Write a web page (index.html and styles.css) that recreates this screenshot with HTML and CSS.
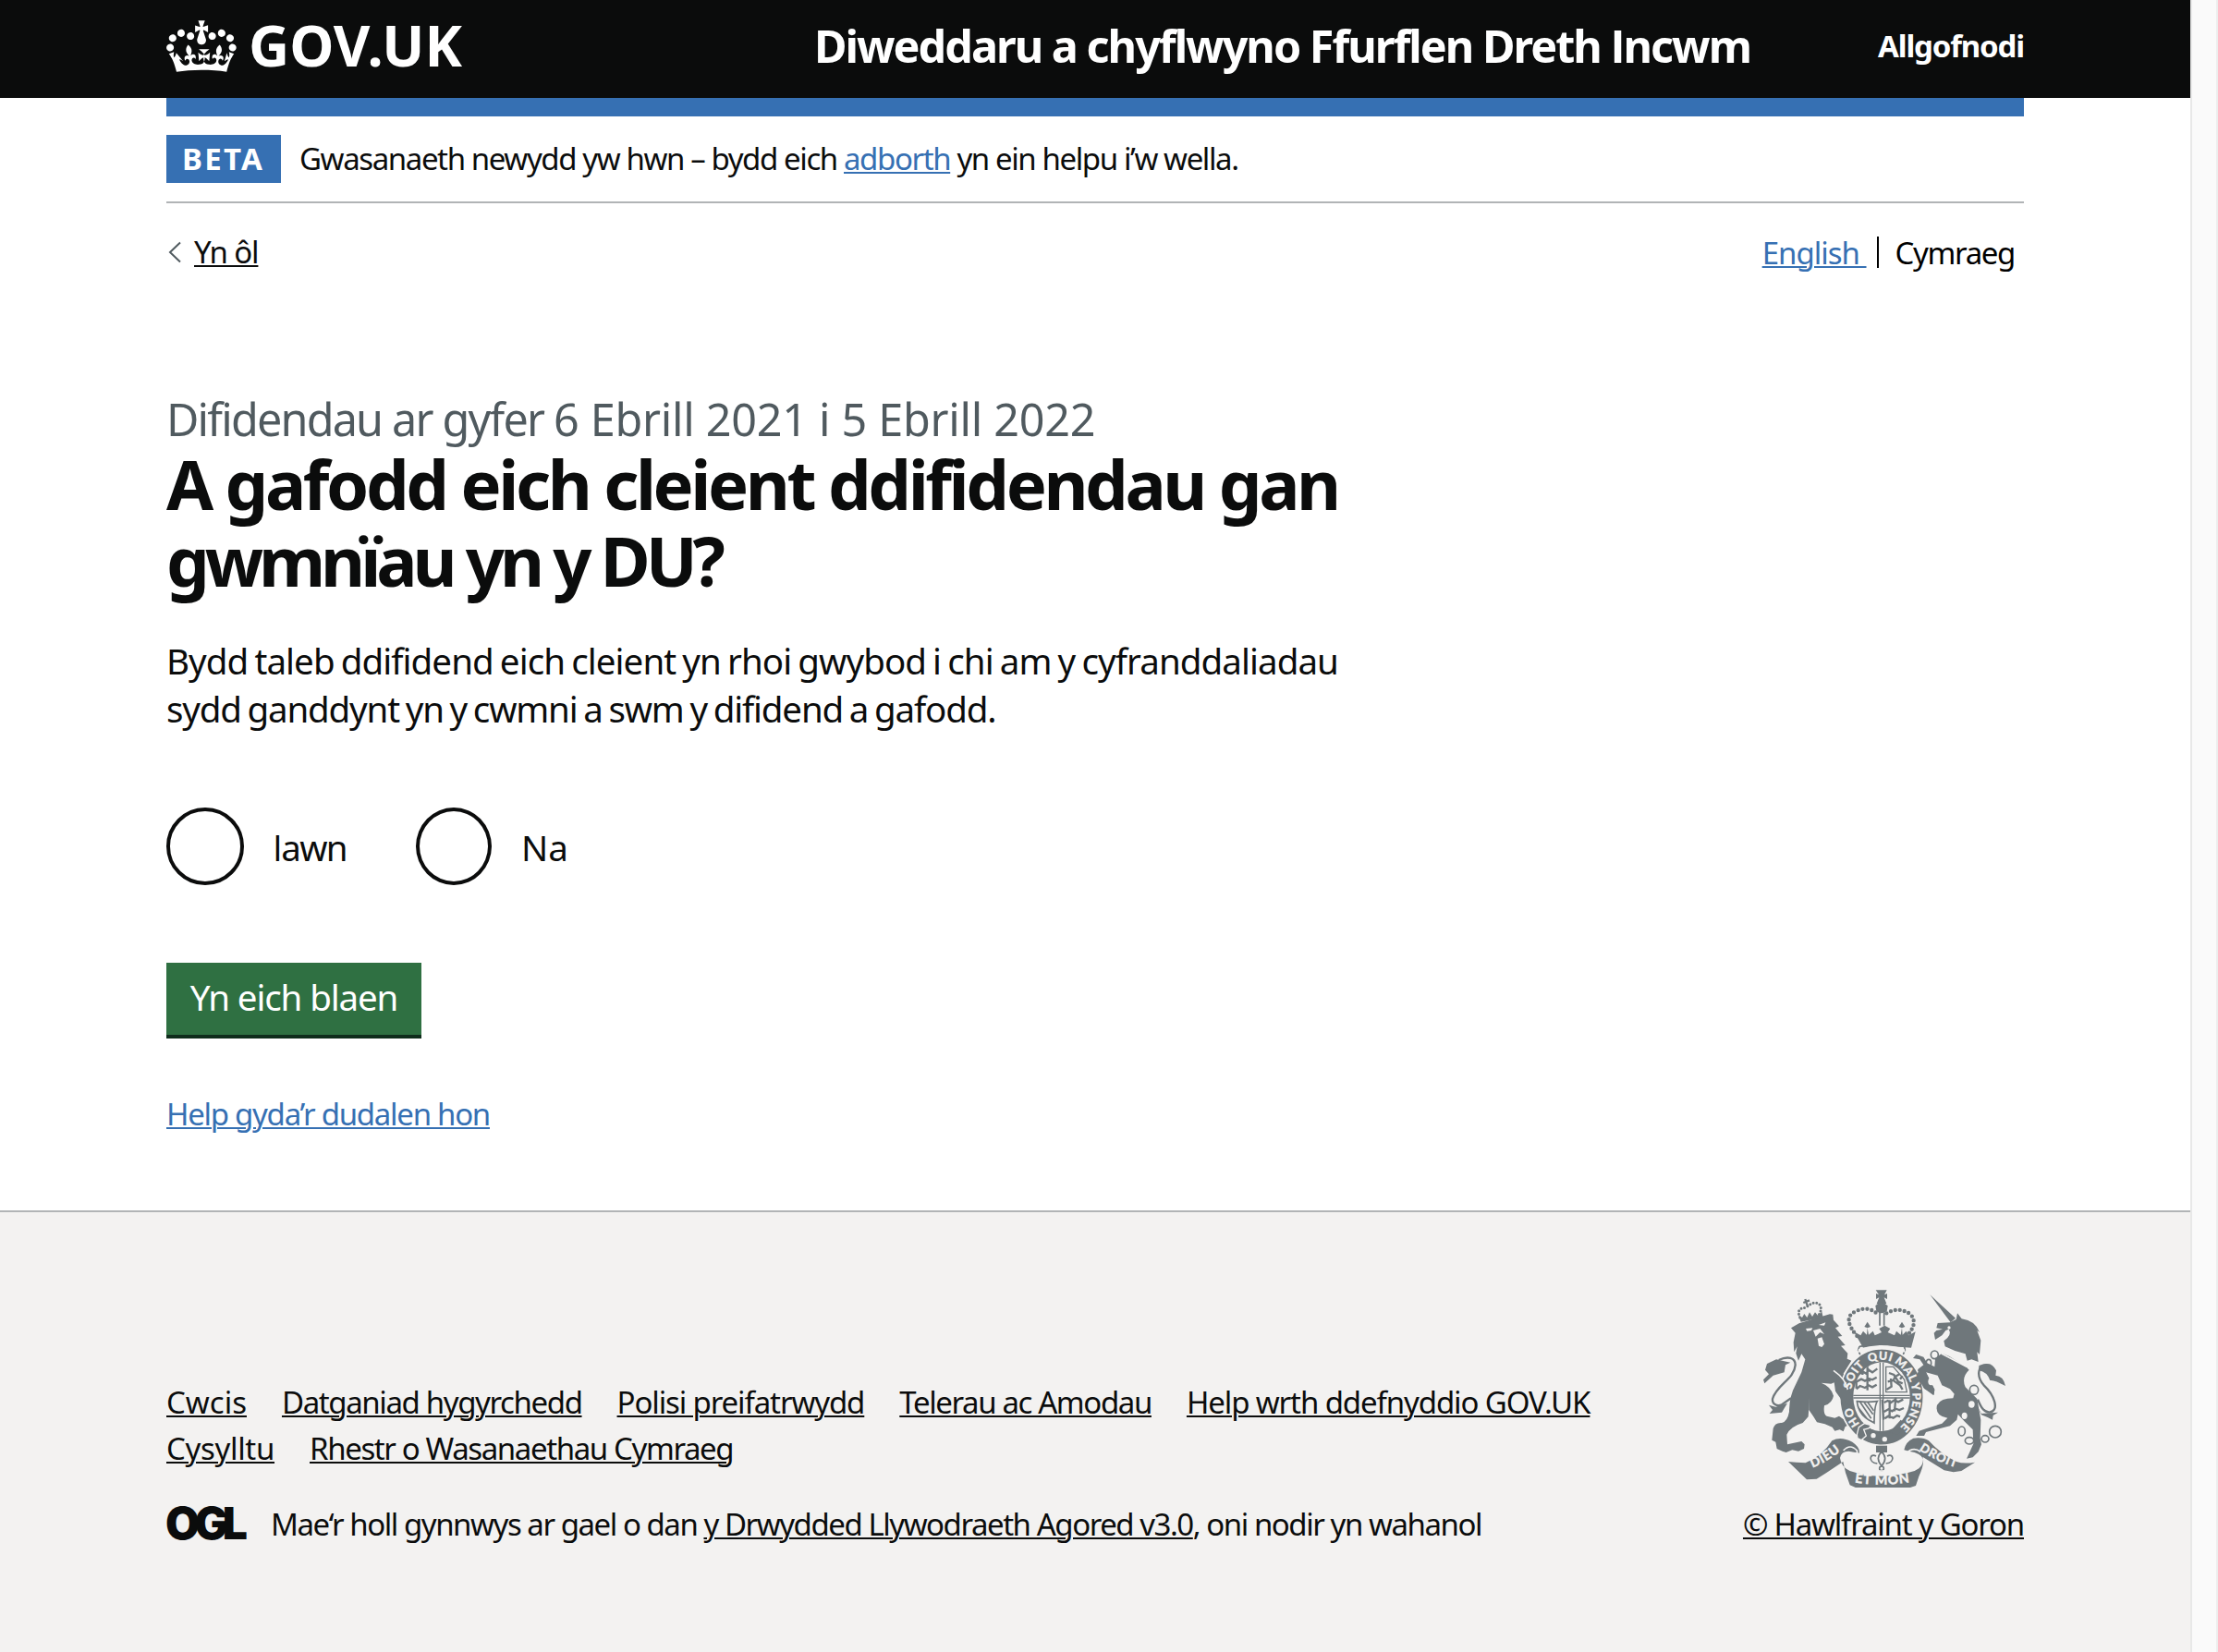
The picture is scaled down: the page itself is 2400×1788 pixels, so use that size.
FILE: index.html
```html
<!DOCTYPE html>
<html lang="cy">
<head>
<meta charset="utf-8">
<title>Difidendau - GOV.UK</title>
<link rel="stylesheet" href="styles.css">
</head>
<body>
<div class="page">
  <header class="header">
    <div class="container header-row">
      <a class="logo" href="#">
        <svg class="crown" viewBox="-0.1 4 35.9 26.1" preserveAspectRatio="none" aria-hidden="true"><path fill="#fff" d="M6.7 12.2c1 .4 2.1-.1 2.5-1s-.1-2.1-1-2.5c-1-.4-2.1.1-2.5 1-.4 1 0 2.1 1 2.5m-4.3 2.5c1 .4 2.1-.1 2.5-1s-.1-2.1-1-2.5c-1-.4-2.1.1-2.5 1-.5 1 0 2.1 1 2.5m-1.3 4.8c1 .4 2.1-.1 2.5-1 .4-1-.1-2.1-1-2.5-1-.4-2.1.1-2.5 1-.4 1 0 2.1 1 2.5m10.4-5.8c1 .4 2.1-.1 2.5-1s-.1-2.1-1-2.5c-1-.4-2.1.1-2.5 1s0 2.1 1 2.5m17.4-1.5c-1 .4-2.1-.1-2.5-1s.1-2.1 1-2.5c1-.4 2.1.1 2.5 1 .5 1 0 2.1-1 2.5m4.3 2.5c-1 .4-2.1-.1-2.5-1s.1-2.1 1-2.5c1-.4 2.1.1 2.5 1 .5 1 0 2.1-1 2.5m1.3 4.8c-1 .4-2.1-.1-2.5-1-.4-1 .1-2.1 1-2.5 1-.4 2.1.1 2.5 1 .4 1 0 2.1-1 2.5m-10.4-5.8c-1 .4-2.1-.1-2.5-1s.1-2.1 1-2.5c1-.4 2.1.1 2.5 1s0 2.1-1 2.5m-5.3-4.9 2.4 1.3V6.5l-2.4.8c-.1-.1-.1-.2-.2-.2s1-3 1-3h-3.4l1 3c-.1.1-.2.1-.2.2-.1.1-2.4-.7-2.4-.7v3.5L17 8.8c-.1.1 0 .2.1.3l-1.4 4.2c-.1.2-.1.4-.1.7 0 1.1.8 2.1 1.9 2.2h.8c1.1-.2 1.9-1.1 1.9-2.1 0-.2 0-.4-.1-.7l-1.4-4.2c.2-.2.3-.3.2-.4m-1 20.3c4.6 0 8.9.3 12.8.9 1.1-4.6 2.4-7.2 3.8-9.1l-2.6-.9c.3 1.3.3 1.9 0 2.8-.4-.4-.8-1.2-1.1-2.4l-1.2 4.2c.8-.5 1.4-.9 2-.9-1.2 2.6-2.7 3.2-3.6 3-1.2-.2-1.7-1.3-1.5-2.2.3-1.3 1.6-1.6 2.2-.1 1.2-2.4-.8-3.1-2.1-2.4 1.9-1.9 2.2-3.6.6-5.7-2.2 1.7-2.2 3.3-1.2 5.6-1.3-1.5-3.3-.7-2.5 1.7.9-1.4 2.1-.5 2 .8-.2 1.2-1.7 2.1-3.7 1.9-2.8-.2-2.9-2.2-3-3.7.7-.1 1.9.5 3 2l.4-4.4c-1.1 1.2-2.2 1.4-3.3 1.5.4-1.2 3-3.1 3-3.1h-5.4s2.6 1.9 3 3.1c-1.1 0-2.2-.3-3.3-1.5l.4 4.4c1.1-1.5 2.3-2.1 3-2-.1 1.6-.2 3.5-3 3.7-1.9.2-3.5-.7-3.7-1.9-.2-1.3 1.1-2.2 1.9-.8.7-2.4-1.3-3.1-2.6-1.7 1-2.3 1-4-1.2-5.6-1.6 2.1-1.3 3.8.6 5.7-1.3-.7-3.2 0-2.1 2.4.6-1.5 1.9-1.1 2.2.1.2.9-.4 1.9-1.5 2.2-1 .2-2.5-.5-3.7-3 .7 0 1.3.4 2 .9L5 20.4c-.3 1.2-.7 1.9-1.2 2.4-.3-.8-.2-1.5 0-2.8l-2.6.9C2.7 22.8 4 25.4 5.1 30c3.8-.5 8.2-.9 12.7-.9"/></svg>
        <span class="logo-text">GOV.UK</span>
      </a>
      <a class="service" href="#">Diweddaru a chyflwyno Ffurflen Dreth <span class="cap-i">I</span>ncwm</a>
      <a class="signout" href="#">Allgofnodi</a>
    </div>
  </header>
  <div class="container">
    <div class="blue-bar"></div>
    <div class="phase">
      <strong class="tag">BETA</strong>
      <span class="phase-text">Gwasanaeth newydd yw hwn – bydd eich <a class="link" href="#">adborth</a> yn ein helpu i’w wella.</span>
    </div>
    <div class="nav-row">
      <a class="back" href="#"><svg class="chevron" viewBox="0 0 14 24" aria-hidden="true"><path d="M13 1.500 2 12l11 10.500" fill="none" stroke="#505a5f" stroke-width="2"/></svg><span class="back-text">Yn ôl</span></a>
      <div class="langs"><a class="link english" href="#">English&nbsp;</a><span class="cymraeg">Cymraeg</span></div>
    </div>
    <main class="main">
      <p class="caption"><span class="caption-topic">Difidendau ar gyfer </span><span class="caption-dates">6 Ebrill 2021 i 5 Ebrill 2022</span></p>
      <h1 class="title"><span class="title-first">A gafodd eich cleient ddifidendau gan</span><br><span class="title-second">gwmnïau yn y DU?</span></h1>
      <p class="body"><span class="body-first">Bydd taleb ddifidend eich cleient yn rhoi gwybod i chi am y cyfranddaliadau</span><br><span class="body-second">sydd ganddynt yn y cwmni a swm y difidend a gafodd.</span></p>
      <div class="radios">
        <label class="radio"><span class="dot"></span><span class="radio-text"><span class="cap-i">I</span>awn</span></label>
        <label class="radio"><span class="dot dot-narrow"></span><span class="radio-text radio-text-short">Na</span></label>
      </div>
      <button class="button" type="button">Yn eich blaen</button>
      <p class="help"><a class="link" href="#">Help gyda’r dudalen hon</a></p>
    </main>
  </div>
  <footer class="footer">
    <div class="container footer-row">
      <div class="footer-main">
        <ul class="footer-links">
          <li class="short"><a href="#">Cwcis</a></li>
          <li class="tight"><a href="#">Datganiad hygyrchedd</a></li>
          <li><a href="#">Polisi preifatrwydd</a></li>
          <li class="tight"><a href="#">Telerau ac Amodau</a></li>
          <li><a href="#">Help wrth ddefnyddio GOV.UK</a></li>
          <li class="short loose"><a href="#">Cysylltu</a></li>
          <li class="tight"><a href="#">Rhestr o Wasanaethau Cymraeg</a></li>
        </ul>
        <div class="licence">
          <span class="ogl">OGL</span>
          <span class="licence-text">Mae‘r holl gynnwys ar gael o dan <a href="#">y Drwydded Llywodraeth Agored v3.0</a>, oni nodir yn wahanol</span>
        </div>
      </div>
      <div class="copyright">
        <svg class="arms" viewBox="84 78 786 642" aria-hidden="true">
          <defs>
            <path id="motto" d="M468 547A101 121 0 0 1 468 305A101 121 0 0 1 468 547"/>
            <path id="dieu" d="M238 658Q292 638 344 594"/>
            <path id="mon" d="M378 703Q468 717 560 703"/>
            <path id="droit" d="M584 594Q636 632 716 658"/>
          </defs>
          <g class="ink">
            <!-- lion -->
            <path d="M200 187 300 157l10 1 2 18 18 20-12 6 22 26-14 2 24 28-14 2 22 24-2 18 14 6-26 42 18 30 4 18 6 22-4 20-18-1-14 2-4-22-14-12-4-28-10 4-32-3q32 12 40 42-4 24-30 32-4 30 8 34l26 6 14-6 22 16 8 14-10 4-6 16-12-6-16 4-8-12-24-10-26-6-12-20-14-20 2-40-4 62-18 20q-40 12-52 38l2 32 46-10 10 10-2 14-18 8-20-4-20 8-12-4-18-8-4-22-12-6 4-38q6-20 28-18 18-4 24-36 0-50 20-86l20-42 12-42-12-18-10 22-8-24 4-22-10 18-2-32 6-30-14-16z"/>
            <path d="M126 304 96 318l-6 20 12 14-18 18 4 12 28-26 36-10 4-24 16-8z"/>
            <path class="line w7" d="M134 306c30-14 54-8 54 16-4 48-60 62-74 110-2 18 14 24 28 20l32-22"/>
            <path d="M102 452 124 458l38-12-18 30-40 4 10-12z"/>
            <path d="m206 182-8-22 12 8 7-12 9 12 8-17 9 14 9-14 9 10 13-12 4 19z"/>
            <path class="line dots" d="M203 168q-14-32 20-32 24-24 42-12 12 14 0 34"/>
            <path class="line w7" d="m214 120 20-8m-14-4 8 24"/>
            <!-- unicorn -->
            <path d="M625 94 708 170l-16 14z"/>
            <path d="m690 184 20-10 4-20 14 18q44 6 58 44l-8-6 12 32-4 46-8-8 4 32-22-8-14 4-6-22-34-10-32-14-4-18q28-20 16-38l-10 4-12 16-22 14-4-22 8-8 20-4-20-4 4-16z"/>
            <path d="M664 284 688 294 744 330 752 338Q726 362 740 394L778 432 784 466 790 500 788 560 792 580 782 604 764 622 744 626 766 578 764 532 738 506 716 482 712 500 690 520 612 540 606 552 580 552 590 536 614 528 664 512 682 494Q640 488 648 452 660 430 700 430L704 416 690 400 664 388 650 356 612 346 640 402 638 420 622 408 606 398 582 362 586 336 604 322 592 304 570 300 580 288 604 296 616 316 640 328 642 300z"/>
            <path d="M784 324q40-18 56 16l-2 16q26 2 32 34-36-20-50-18-10-28-36-32z"/>
            <path class="line w7" d="M822 324c-44-12-48 34-22 64 32 30 54 82 18 88-22-2-30-24-38-42"/>
            <path d="m776 452 16 28 54-4-16 10-2 14-16-8-20-8z"/>
            <circle class="line w5" cx="837" cy="539" r="19"/><ellipse class="line w5" cx="804" cy="562" rx="12" ry="11"/><ellipse class="line w5" cx="753" cy="568" rx="14" ry="11"/><ellipse class="line w5" cx="728" cy="537" rx="11" ry="15"/><ellipse class="line w5" cx="768" cy="403" rx="14" ry="15"/><ellipse class="line w5" cx="640" cy="289" rx="12" ry="13"/><ellipse class="line w5" cx="621" cy="316" rx="8" ry="12"/>
            <!-- royal crown -->
            <path d="M449 79h36l-8 15 9-4v18l-10-5 8 20h-32l8-20-10 5V90l9 4z"/>
            <path d="M448 130q20-22 40 0l-3 18q-18 12-34 0z"/>
            <path class="line dots-lg" d="M388 228Q340 170 380 150q40-22 72 4m32 0q40-22 76 2 30 30-12 74"/>
            <path d="m378 214 22 12 8-14 12 12 2-22-10-4 10-16 10 16-10 4 4 22 14-12 6 14 22-10-8-12 18-10 18 10-8 12 22 10 6-14 14 12 4-22-10-4 10-16 10 16-10 4 2 22 12-12 8 14 22-12-14 52-78-6-78 6z"/>
            <path class="line w5" d="M462 152v42m14-42v42"/>
            <path class="line w5" d="M396 262q72-14 146 0l2 12-8 18M396 262l-4 12 8 18"/>
            <!-- garter -->
            <ellipse class="garter" cx="468" cy="426" rx="136" ry="157"/>
            <path d="M322 350 346 372 362 400 372 430 364 454 350 440 344 456 334 430 320 410z"/>
            <path d="M584 346 612 346 640 402 636 420 606 398 586 366z"/>
            <!-- scrolls -->
            <path d="M165 636q24 2 56 4 54-22 86-72 28-16 66 4 26 18 22 36l-34-6q-24 0-28 22 4 22 18 34l14 8q100 34 210 0l14-8q14-12 14-30-6-20-46-26l-16-4q4-26 30-38 32-4 50 8 40 44 90 68 24 8 60 2l-44 28-26 4-30-6-70-44q8 20-12 64l-10 30-42 14-70 6-70-8-32-14-14-40-8-36-54 36-32 20-32 2z"/>
            <path d="M450 584h36v22h-36z"/>
            <circle class="line w5" cx="468" cy="658" r="7"/>
          </g>
          <g class="paper">
            <ellipse cx="468" cy="425" rx="92" ry="112"/>
            <path d="m264 192 22-8-4 10zm-42 12 22-2-4 8-14 2zm38 32 14-4 8 22-8 10-10-4z"/>
            <path d="m246 210 8 20 14-14 14 6-14-18z"/>
            <path d="M393 270q75-24 149 0l4 12q-76-22-156 0z"/>
            <ellipse cx="760" cy="450" rx="10" ry="11"/><ellipse cx="737" cy="487" rx="9" ry="11"/><ellipse cx="629" cy="376" rx="10" ry="12"/>
            <path class="cut w5" d="m668 264 84 64 12-14m-96-50-4 22 80 42"/>
            <path class="cut w5" d="M672 268q36 34 86 52M344 600q22-24 44 0 4 20-26 28M594 604q-22-18-46 4 0 14 20 20M312 340q40 28 46 62"/>
            <circle cx="441" cy="551" r="8"/><circle cx="478" cy="563" r="8"/>
            <circle cx="687" cy="201" r="5"/>
            <path d="M350 622q-4-14 18-8 20 4 24-8 8 16-6 26l-8 14q42 18 90 18t98-20l-14-14q-16-20 8-26 4 18 24 14 12 2 8 14l-14 16q-108 40-212 2-16-8-16-28z"/>
          </g>
          <g class="ink">
            <path class="line w5" d="M468 604q-22 20 0 46 22-26 0-46m-14 38c-32-4-24-36-4-24m32 24c32-4 24-36 4-24"/>
            <path class="line w4" d="M463 314v222m10-222v222M376 421h184m-184 8h184"/>
            <path class="line w7" d="m396 350 12-6 10 6 8-12 12 8 16-12m-66 42 14-8 12 6 12-8 12 4 14-8m-66 38 12-10 16 6 12-8 12 6 14-8m-46-52v20m16-26v76m-36-30v24m38-64 4 10m-6 24 10 6"/>
            <path class="line w7" d="m476 444 12-6 10 6 12-8 12 6 16-8m-62 40 14-8 12 6 12-8 12 4 14-6m-62 34 12-8 16 6 12-8 10 4m-58-56 4 66m20-64v60m20-68-4 44"/>
            <path class="line w4" d="M482 328h24l36 42 8 40h-68z"/>
            <path class="line w7" d="m492 348 16 6 14 22 14 6m-48-6 18-4 6-12 14-8m-28 14 2 26-16 10m24-28 20 14 8 14m-8-34 8-10"/>
            <path class="line w5" d="M388 440q34 4 66 0-10 16-10 70l-18-10q-34-20-38-60zm10 2 36 54m-24-54 30 40m-18-40 20 28m-50-10 30 38"/>
            <path d="M494 540 530 500 552 516 520 548z"/>
            <path class="buckle" d="m388 548 6-24 18-12 22 6-8 10-16 4 8 20-16 14-12-6z"/>
          </g>
          <g class="motto-text">
            <text font-size="37"><textPath href="#motto" startOffset="112">HO</textPath></text>
            <text font-size="37"><textPath href="#motto" startOffset="245">SOIT</textPath></text>
            <text font-size="37"><textPath href="#motto" startOffset="345">QUI</textPath></text>
            <text font-size="37"><textPath href="#motto" startOffset="434">MAL</textPath></text>
            <text font-size="37"><textPath href="#motto" startOffset="493">Y</textPath></text>
            <text font-size="37"><textPath href="#motto" startOffset="572">PENSE</textPath></text>
            <text font-size="42"><textPath href="#dieu" startOffset="60">DIEU</textPath></text>
            <text font-size="43"><textPath href="#mon" startOffset="93">ET MON</textPath></text>
            <text font-size="40"><textPath href="#droit" startOffset="74">DROIT</textPath></text>
          </g>
        </svg>
        <a class="copyright-link" href="#">© Hawlfraint y Goron</a>
      </div>
    </div>
  </footer>
</div>
<div class="scroll-gutter"></div>
</body>
</html>
```
FILE: styles.css
```css
* { box-sizing: border-box; }
body {
  margin: 0;
  display: flex;
  height: 1788px;
  overflow: hidden;
  background: #fff;
  color: #0b0c0c;
  font-family: "Noto Sans", "Liberation Sans", sans-serif;
  font-size: 33px;
}
p, h1, ul { margin: 0; padding: 0; }
a { color: inherit; text-decoration-thickness: 2px; text-underline-offset: 2px; }
.page { width: 2370px; display: flex; flex-direction: column; }
.scroll-gutter { width: 30px; background: #fafafa; border-left: 2px solid #e8e8e8; border-right: 2px solid #ededed; }
.container { width: 2010px; margin: 0 auto; white-space: nowrap; }
.cap-i { font-family: "Open Sans", sans-serif; }

.header { height: 106px; background: #0b0c0c; color: #fff; font-weight: 700; }
.header a { text-decoration: none; }
.header-row { display: grid; grid-template-columns: 701px 1fr auto; align-items: center; height: 98px; }
.logo { display: flex; align-items: center; }
.crown { width: 76px; height: 56px; margin: 2px 13px 0 0; }
.logo-text { font-size: 61px; line-height: 60px; letter-spacing: 0; }
.service { font-size: 48.500px; line-height: 60px; letter-spacing: -1.980px; }
.signout { font-size: 33px; letter-spacing: -1.160px; }

.blue-bar { height: 20px; background: #3670b3; }
.phase { display: flex; align-items: center; padding: 20px 0; border-bottom: 2px solid #b1b4b6; }
.tag { width: 124px; height: 52px; padding-left: 17px; line-height: 52px; letter-spacing: 2.300px; color: #fff; background: #3670b3; }
.phase-text { margin-left: 20px; line-height: 50px; letter-spacing: -1.400px; }
.link { color: #3670b3; }
.nav-row { display: flex; justify-content: space-between; align-items: center; height: 52px; margin-top: 26px; }
.back { display: flex; align-items: center; text-decoration: none; }
.back-text { text-decoration: underline; text-decoration-thickness: 2px; text-underline-offset: 2px; letter-spacing: -1.150px; }
.chevron { width: 14px; height: 24px; margin: 2px 14px 0 2px; }
.langs { display: flex; align-items: center; color: #000; padding: 3px 10px 0 0; letter-spacing: -1px; }
.cymraeg { position: relative; padding-left: 31px; letter-spacing: -1.350px; }
.cymraeg::before { content: ""; position: absolute; left: 11px; top: 5px; width: 2px; height: 34px; background: #000; }

.main { padding-top: 127px; height: 1012px; }
.caption { font-size: 48.500px; line-height: 56px; color: #505a5f; }
.caption-topic { letter-spacing: -1.800px; }
.caption-dates { letter-spacing: -0.280px; }
.title { margin-top: 2px; font-size: 74px; line-height: 82.500px; }
.title-first { letter-spacing: -3.420px; }
.title-second { letter-spacing: -5.050px; }
.body { margin-top: 41px; font-size: 38.500px; line-height: 52px; }
.body-first { letter-spacing: -0.920px; word-spacing: -2px; }
.body-second { letter-spacing: -1.180px; word-spacing: -2px; }
.radios { display: flex; margin-top: 81px; font-size: 38.500px; }
.radio { display: flex; align-items: center; height: 84px; width: 270px; gap: 31px; }
.radio-text { padding-top: 2px; letter-spacing: -1.600px; }
.radio-text-short { margin-left: 1px; letter-spacing: 0; }
.dot { width: 84px; height: 84px; border: 4px solid #0b0c0c; border-radius: 50%; }
.dot-narrow { width: 82px; }
.button { display: block; width: 276px; height: 78px; margin-top: 84px; padding: 0 0 4px; border: 0; background: #2f7042; box-shadow: 0 4px 0 #0f2d1c; color: #fff; font: 38.500px/52px "Noto Sans", sans-serif; letter-spacing: -1.120px; }
.help { margin-top: 66px; line-height: 40px; letter-spacing: -1.280px; }

.footer { flex: 1; padding-top: 84px; border-top: 2px solid #b1b4b6; background: #f3f2f1; }
.footer-row { display: flex; align-items: flex-end; justify-content: space-between; }
.footer-links { display: flex; flex-wrap: wrap; gap: 0 38px; width: 1600px; list-style: none; line-height: 50px; letter-spacing: -1.120px; }
.tight { letter-spacing: -1.390px; }
.short { letter-spacing: 0; }
.loose { letter-spacing: -0.330px; }
.licence { display: flex; align-items: center; height: 50px; margin-top: 31px; padding-top: 1px; }
.licence-text { letter-spacing: -1.460px; }
.ogl { width: 113px; font: 900 48px/48px Inter, sans-serif; letter-spacing: -5.800px; margin-top: -2px; text-indent: -1px; }
.copyright { display: flex; flex-direction: column; align-items: flex-end; line-height: 50px; }
.copyright-link { height: 49px; letter-spacing: -1.220px; }
.arms { width: 262px; height: 214px; margin: 0 20px 15px 0; }
.ink { fill: #6f777b; }
.paper, .motto-text { fill: #f3f2f1; }
.motto-text { font-family: Lato, sans-serif; font-weight: 900; text-anchor: middle; letter-spacing: 2px; stroke: #f3f2f1; stroke-width: 0.8; }
.garter { stroke: #f3f2f1; stroke-width: 5; }
.buckle { stroke: #f3f2f1; stroke-width: 4; }
.line { fill: none; stroke: #6f777b; }
.cut { fill: none; stroke: #f3f2f1; }
.w4 { stroke-width: 4; }
.w5 { stroke-width: 5; }
.w7 { stroke-width: 7; }
.dots { stroke-width: 9; stroke-linecap: round; stroke-dasharray: 0 11; }
.dots-lg { stroke-width: 13; stroke-linecap: round; stroke-dasharray: 0 15; }
```
